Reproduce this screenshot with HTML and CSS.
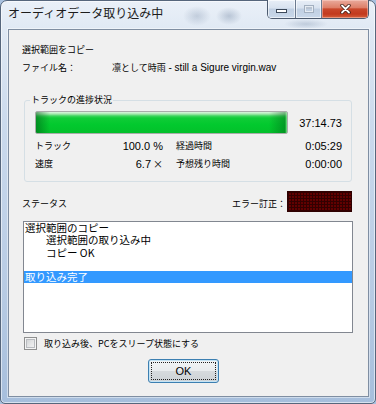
FILE: index.html
```html
<!DOCTYPE html>
<html lang="ja">
<head>
<meta charset="utf-8">
<title>オーディオデータ取り込み中</title>
<link rel="stylesheet" href="styles.css">
</head>
<body>
<div class="window">
  <div class="titlebar">
    <div class="title">オーディオデータ取り込み中</div>
    <div class="caption">
      <div class="cbtn min"><span class="min-ico"></span></div>
      <div class="cbtn max"><span class="max-ico"></span></div>
      <div class="cbtn close">
        <svg class="x-ico" width="11" height="10" viewBox="0 0 11 10">
          <path d="M2 1.5 L9 8.5 M9 1.5 L2 8.5" stroke="#3b1a12" stroke-width="3.4" stroke-linecap="round" fill="none"/>
          <path d="M2 1.5 L9 8.5 M9 1.5 L2 8.5" stroke="#ffffff" stroke-width="1.8" stroke-linecap="round" fill="none"/>
        </svg>
      </div>
    </div>
  </div>
  <div class="client">
    <div class="line jp">選択範囲をコピー</div>
    <div class="line file"><span class="lbl jp">ファイル名：</span><span class="fname"><span class="jp">凛として時雨</span> - still a Sigure virgin.wav</span></div>
    <div class="group">
      <div class="legend jp">トラックの進捗状況</div>
      <div class="barrow"><div class="bar"></div><div class="num">37:14.73</div></div>
      <div class="stats">
        <div class="cell"><span class="jp">トラック</span><span class="num">100.0 %</span></div>
        <div class="cell"><span class="jp">経過時間</span><span class="num">0:05:29</span></div>
        <div class="cell"><span class="jp">速度</span><span class="num">6.7<span class="times">×</span></span></div>
        <div class="cell"><span class="jp">予想残り時間</span><span class="num">0:00:00</span></div>
      </div>
    </div>
    <div class="statusrow">
      <span class="jp st">ステータス</span>
      <span class="jp err">エラー訂正：</span>
      <div class="led"></div>
    </div>
    <div class="list">
      <div class="item">選択範囲のコピー</div>
      <div class="item ind">選択範囲の取り込み中</div>
      <div class="item ind">コピー OK</div>
      <div class="item"></div>
      <div class="item sel">取り込み完了</div>
    </div>
    <div class="chkrow"><span class="chk"></span><span class="jp">取り込み後、PCをスリープ状態にする</span></div>
    <div class="okbtn"><span class="focus">OK</span></div>
  </div>
</div>
</body>
</html>
```
FILE: styles.css
```css
* { box-sizing: border-box; margin: 0; padding: 0; }
html, body { width: 376px; height: 404px; overflow: hidden; }
body {
  background: #a9c1df;
  font-family: "Liberation Sans", "Noto Sans CJK JP", sans-serif;
  color: #000;
}
.window {
  width: 376px;
  height: 404px;
  border: 1px solid #56667c;
  border-radius: 7px 7px 5px 5px;
  padding: 0 6px 6px 7px;
  display: flex;
  flex-direction: column;
  box-shadow: inset 0 0 0 1px rgba(255,255,255,0.55);
  background:
    radial-gradient(ellipse 14px 10px at 196px 15px, rgba(70,95,130,0.22), rgba(70,95,130,0)),
    radial-gradient(ellipse 13px 9px at 228px 15px, rgba(70,95,130,0.28), rgba(70,95,130,0)),
    radial-gradient(ellipse 22px 5px at 305px 23px, rgba(70,95,130,0.22), rgba(70,95,130,0)),
    linear-gradient(to bottom, #eaf0f8 0px, #e0e9f4 28px, #cbdaed 120px, #b6cae3 300px, #a6bedc 404px);
}
.titlebar {
  height: 28px;
  display: flex;
  justify-content: space-between;
  align-items: flex-start;
}
.title {
  font-family: "Noto Sans CJK JP", sans-serif;
  font-size: 12px;
  line-height: 16px;
  margin-top: 4px;
  color: #1c1c1c;
}
.caption {
  display: flex;
  height: 19px;
  margin-top: -1px;
  border: 1px solid #4d5b6f;
  border-top: none;
  border-radius: 0 0 5px 5px;
  overflow: hidden;
}
.cbtn {
  height: 100%;
  display: flex;
  align-items: center;
  justify-content: center;
  box-shadow: inset 0 0 0 1px rgba(255,255,255,0.6);
}
.min, .max {
  background: linear-gradient(to bottom, #e8eef7 0%, #d8e2ef 45%, #c0cfe2 50%, #c9d8ea 100%);
}
.min { width: 28px; border-right: 1px solid #6b7a8f; align-items: flex-end; padding-bottom: 5px; }
.max { width: 26px; border-right: 1px solid #6b7a8f; }
.min-ico {
  width: 11px;
  height: 4px;
  background: #fff;
  border: 1px solid #3c495a;
}
.max-ico {
  width: 10px;
  height: 8px;
  border: 1px solid #a3b0c0;
  box-shadow: inset 0 0 0 1px #e6ecf3, inset 0 2px 0 1px #b8c3d1;
  margin-top: -1px;
}
.close {
  width: 46px;
  background: linear-gradient(to bottom, #e9aa9c 0%, #de8069 42%, #c9472b 50%, #c23a1e 78%, #d6603c 100%);
  box-shadow: inset 0 0 0 1px rgba(255,220,210,0.45);
}
.x-ico { display: block; margin-left: 1px; }

.client {
  height: 368px;
  border: 1px solid #7f8ea2;
  box-shadow: 0 0 0 1px rgba(255,255,255,0.45);
  background: #f0f0f0;
  padding: 14px 14px 0 13px;
  display: flex;
  flex-direction: column;
  align-items: flex-start;
}
.jp {
  font-family: "Noto Sans CJK JP", sans-serif;
  font-size: 9px;
}
.line {
  height: 12px;
  line-height: 12px;
  white-space: nowrap;
}
.file { margin-top: 6px; display: flex; }
.lbl { width: 90px; }
.fname { font-size: 10px; }

.group {
  position: relative;
  margin-top: 26px;
  margin-left: 2px;
  width: 328px;
  height: 82px;
  border: 1px solid #d5dfe5;
  border-radius: 3px;
  padding: 10px 9px 11px 10px;
}
.legend {
  position: absolute;
  left: 5px;
  top: -7px;
  line-height: 12px;
  padding: 0 1px;
  background: #f0f0f0;
  white-space: nowrap;
}
.barrow {
  height: 23px;
  display: flex;
  justify-content: space-between;
  align-items: center;
}
.bar {
  width: 253px;
  height: 23px;
  border: 1px solid #a9aca9;
  border-radius: 2px;
  background:
    linear-gradient(to right, rgba(0,85,20,0.5) 0, rgba(0,85,20,0) 14px, rgba(0,85,20,0) calc(100% - 18px), rgba(0,85,20,0.4) calc(100% - 2px), rgba(150,240,160,0.8) 100%),
    linear-gradient(to bottom, #dcf6df 0, #a4e8ac 2px, #3cd45c 4px, #10cc37 6px, #02c92e 60%, #03c02b 100%);
}
.num {
  font-size: 11px;
  line-height: 12px;
  white-space: nowrap;
}
.times {
  font-family: "Noto Sans CJK JP", sans-serif;
  font-size: 10px;
  margin-left: 2px;
}
.stats {
  margin-top: 6px;
  display: grid;
  grid-template-columns: 128px 166px;
  column-gap: 13px;
  row-gap: 6px;
}
.cell {
  height: 12px;
  line-height: 12px;
  display: flex;
  justify-content: space-between;
  white-space: nowrap;
}

.statusrow {
  margin-top: 9px;
  width: 330px;
  height: 21px;
  display: flex;
  align-items: flex-start;
}
.st, .err { margin-top: 7px; line-height: 12px; white-space: nowrap; }
.err { margin-left: auto; margin-right: 1px; }
.led {
  width: 65px;
  height: 21px;
  border: 1px solid #2e0000;
  background-color: #620000;
  background-image:
    linear-gradient(to right, #330000 1px, rgba(0,0,0,0) 1px),
    linear-gradient(to bottom, #330000 1px, rgba(0,0,0,0) 1px);
  background-size: 3px 3px;
}

.list {
  margin-top: 9px;
  margin-left: 1px;
  width: 330px;
  height: 112px;
  border: 1px solid #828790;
  background: #fff;
}
.item {
  height: 12.25px;
  line-height: 12.25px;
  font-family: "Noto Sans CJK JP", sans-serif;
  font-size: 10.5px;
  padding-left: 1px;
  white-space: nowrap;
}
.ind { padding-left: 22px; }
.sel { background: #3399ff; color: #fff; }

.chkrow {
  margin-top: 4px;
  margin-left: 2px;
  height: 13px;
  display: flex;
  align-items: center;
  gap: 7px;
}
.chkrow .jp { line-height: 12px; white-space: nowrap; }
.chk {
  width: 13px;
  height: 13px;
  border: 1px solid #8e8f8f;
  background: linear-gradient(135deg, #c9cbcd 0%, #e4e5e6 50%, #f8f8f8 100%);
  box-shadow: inset 0 0 0 1px #f4f4f4, inset 0 0 0 2px #b9bcc0;
}

.okbtn {
  margin-top: 9px;
  margin-left: 126px;
  width: 71px;
  height: 24px;
  border: 1px solid #3c7fb1;
  border-radius: 3px;
  padding: 2px;
  display: flex;
  background: linear-gradient(to bottom, #f3f5f6 0%, #e9ecee 48%, #d6dadd 52%, #cdd2d6 100%);
  box-shadow: inset 0 0 0 1px #c5e4f5;
}
.focus {
  flex: 1;
  border: 1px dotted #222;
  display: flex;
  align-items: center;
  justify-content: center;
  font-size: 11px;
  line-height: 12px;
}
```
